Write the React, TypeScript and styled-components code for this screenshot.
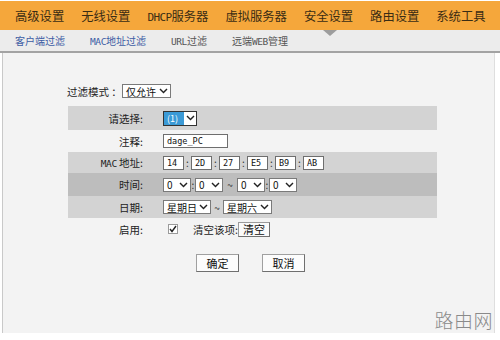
import React from 'react';
import styled, { createGlobalStyle } from 'styled-components';

const Global = createGlobalStyle`
  html, body { margin: 0; padding: 0; background: #fff; }
  body { font-family: "Noto Sans CJK SC", "Noto Sans", sans-serif; }
  #root { width: 500px; height: 340px; }
`;

const Page = styled.div`
  width: 500px;
  height: 340px;
  position: relative;
  overflow: hidden;
  background: #fff;
`;

const TopNav = styled.nav`
  margin-top: 1px;
  height: 29px;
  background: #f5a73b;
  display: flex;
  align-items: center;
  padding-left: 15px;
  gap: 17px;
`;

const TopItem = styled.span`
  font-size: 12.3px;
  color: #3a2c14;
  white-space: nowrap;
`;

const Latin = styled.span<{ $size: number; $track: number }>`
  font-family: "DejaVu Sans Mono", "Liberation Mono", monospace;
  font-size: ${(p) => p.$size}px;
  letter-spacing: ${(p) => p.$track}px;
`;

const SubNav = styled.div`
  position: relative;
  height: 21px;
  background: #ececec;
  border-bottom: 2px solid #a3a3a3;
  display: flex;
  align-items: center;
  padding-left: 15px;
  gap: 25px;
`;

const SubItem = styled.span<{ $active?: boolean }>`
  font-size: 10px;
  color: ${(p) => (p.$active ? '#3c5ca4' : '#555')};
  white-space: nowrap;
`;

const Pointer = styled.span`
  position: absolute;
  left: 323px;
  top: 0;
  width: 0;
  height: 0;
  border-left: 7px solid transparent;
  border-right: 7px solid transparent;
  border-top: 6px solid #9d9d9d;
`;

const Panel = styled.main`
  margin-left: 2px;
  width: 493px;
  height: 280px;
  box-sizing: border-box;
  background: #f3f3f3;
  border-left: 1px solid #c9c9c9;
  border-right: 1px solid #dedede;
  padding-top: 31px;
`;

const ModeRow = styled.div`
  display: flex;
  align-items: center;
  padding-left: 64px;
  height: 14px;
  font-size: 10.5px;
  color: #222;
`;

const ModeLabel = styled.span`
  width: 55px;
`;

const Table = styled.div`
  margin: 8px 0 0 65px;
  width: 369px;
  display: flex;
  flex-direction: column;
`;

const bandColor = { none: 'transparent', light: '#d3d3d3', dark: '#bdbdbd' };

const Row = styled.div<{ $band: 'none' | 'light' | 'dark'; $h: number }>`
  display: grid;
  grid-template-columns: 82px 1fr;
  align-items: center;
  height: ${(p) => p.$h}px;
  background: ${(p) => bandColor[p.$band]};
  font-size: 10.5px;
  color: #222;
`;

const Label = styled.span`
  text-align: right;
  padding-right: 7px;
  white-space: nowrap;
`;

const Value = styled.div`
  display: flex;
  align-items: center;
  padding-left: 13px;
`;

const SelectBox = styled.span<{ $w: number }>`
  display: inline-flex;
  align-items: center;
  justify-content: space-between;
  width: ${(p) => p.$w}px;
  height: 14px;
  box-sizing: border-box;
  border: 1px solid #7a7a7a;
  background: #fff;
  font-size: 10px;
  padding: 0 2px 0 3px;
  color: #111;
  white-space: nowrap;
`;

const PickSelect = styled.span`
  display: inline-flex;
  align-items: stretch;
  width: 34px;
  height: 15px;
  box-sizing: border-box;
  border: 1px solid #333;
  background: #fff;
`;

const PickValue = styled.span`
  flex: 1;
  background: #3b9ad6;
  color: #fff;
  font-size: 9px;
  display: flex;
  align-items: center;
  padding-left: 3px;
`;

const PickArrow = styled.span`
  width: 12px;
  display: flex;
  align-items: center;
  justify-content: center;
`;

const TextBox = styled.span<{ $w: number }>`
  display: inline-flex;
  align-items: center;
  width: ${(p) => p.$w}px;
  height: 14px;
  box-sizing: border-box;
  border: 1px solid #6e6e6e;
  background: #fff;
  font-family: "DejaVu Sans Mono", "Liberation Mono", monospace;
  font-size: 8.5px;
  padding-left: 3px;
  color: #111;
`;

const Sep = styled.span<{ $w: number }>`
  width: ${(p) => p.$w}px;
  text-align: center;
  font-size: 10px;
  color: #333;
`;

const Check = styled.span`
  margin-left: 5px;
  width: 10px;
  height: 10px;
  box-sizing: border-box;
  border: 1px solid #9a9a9a;
  background: #fff;
  display: inline-flex;
  align-items: center;
  justify-content: center;
`;

const ClearText = styled.span`
  margin-left: 15px;
`;

const SmallButton = styled.span`
  display: inline-flex;
  align-items: center;
  justify-content: center;
  width: 32px;
  height: 15px;
  box-sizing: border-box;
  border: 1px solid #9a9a9a;
  border-right-color: #707070;
  border-bottom-color: #707070;
  background: #fafafa;
  font-size: 11px;
  color: #111;
`;

const Buttons = styled.div`
  display: flex;
  justify-content: center;
  gap: 23px;
  margin-top: 14px;
  padding-left: 4px;
`;

const Button = styled.span`
  display: inline-flex;
  align-items: center;
  justify-content: center;
  width: 43px;
  height: 18px;
  box-sizing: border-box;
  border: 1px solid #a0a0a0;
  border-right-color: #6f6f6f;
  border-bottom-color: #6f6f6f;
  background: #fcfcfc;
  font-size: 11px;
  color: #111;
`;

const Watermark = styled.span`
  position: absolute;
  right: 7px;
  bottom: 7px;
  font-size: 19px;
  font-weight: 300;
  color: #8a8a8a;
  letter-spacing: 0.5px;
`;

const Chevron = () => (
  <svg width="9" height="6" viewBox="0 0 9 6">
    <polyline points="1,1 4.5,4.6 8,1" fill="none" stroke="#222" strokeWidth="1.4" />
  </svg>
);

const Select = ({ w, text }: { w: number; text: string }) => (
  <SelectBox $w={w}>
    <span>{text}</span>
    <Chevron />
  </SelectBox>
);

const topItems: React.ReactNode[] = [
  '高级设置',
  '无线设置',
  <>
    <Latin $size={11} $track={-0.6}>DHCP</Latin>服务器
  </>,
  '虚拟服务器',
  '安全设置',
  '路由设置',
  '系统工具',
];

const mac = ['14', '2D', '27', 'E5', 'B9', 'AB'];

export default function App() {
  return (
    <Page>
      <Global />
      <TopNav>
        {topItems.map((t, i) => (
          <TopItem key={i}>{t}</TopItem>
        ))}
      </TopNav>
      <SubNav>
        <Pointer />
        <SubItem $active>客户端过滤</SubItem>
        <SubItem $active>
          <Latin $size={9.5} $track={-0.4}>MAC</Latin>地址过滤
        </SubItem>
        <SubItem>
          <Latin $size={9.5} $track={-0.4}>URL</Latin>过滤
        </SubItem>
        <SubItem>
          远端<Latin $size={9.5} $track={-0.4}>WEB</Latin>管理
        </SubItem>
      </SubNav>
      <Panel>
        <ModeRow>
          <ModeLabel>过滤模式 ：</ModeLabel>
          <Select w={49} text="仅允许" />
        </ModeRow>
        <Table>
          <Row $band="light" $h={24}>
            <Label>请选择:</Label>
            <Value>
              <PickSelect>
                <PickValue>(1)</PickValue>
                <PickArrow>
                  <Chevron />
                </PickArrow>
              </PickSelect>
            </Value>
          </Row>
          <Row $band="none" $h={22}>
            <Label>注释:</Label>
            <Value>
              <TextBox $w={65}>dage_PC</TextBox>
            </Value>
          </Row>
          <Row $band="light" $h={21}>
            <Label>
              <Latin $size={9.5} $track={-0.4}>MAC</Latin> 地址:
            </Label>
            <Value>
              {mac.map((m, i) => (
                <React.Fragment key={m}>
                  {i > 0 && <Sep $w={7}>:</Sep>}
                  <TextBox $w={21}>{m}</TextBox>
                </React.Fragment>
              ))}
            </Value>
          </Row>
          <Row $band="dark" $h={23}>
            <Label>时间:</Label>
            <Value>
              <Select w={28} text="0" />
              <Sep $w={4}>:</Sep>
              <Select w={28} text="0" />
              <Sep $w={14}>~</Sep>
              <Select w={28} text="0" />
              <Sep $w={4}>:</Sep>
              <Select w={28} text="0" />
            </Value>
          </Row>
          <Row $band="light" $h={22}>
            <Label>日期:</Label>
            <Value>
              <Select w={48} text="星期日" />
              <Sep $w={12}>~</Sep>
              <Select w={49} text="星期六" />
            </Value>
          </Row>
          <Row $band="none" $h={22}>
            <Label>启用:</Label>
            <Value>
              <Check>
                <svg width="8" height="8" viewBox="0 0 8 8">
                  <polyline points="1,4 3,6.5 7,1" fill="none" stroke="#222" strokeWidth="1.4" />
                </svg>
              </Check>
              <ClearText>清空该项:</ClearText>
              <SmallButton>清空</SmallButton>
            </Value>
          </Row>
        </Table>
        <Buttons>
          <Button>确定</Button>
          <Button>取消</Button>
        </Buttons>
      </Panel>
      <Watermark>路由网</Watermark>
    </Page>
  );
}
